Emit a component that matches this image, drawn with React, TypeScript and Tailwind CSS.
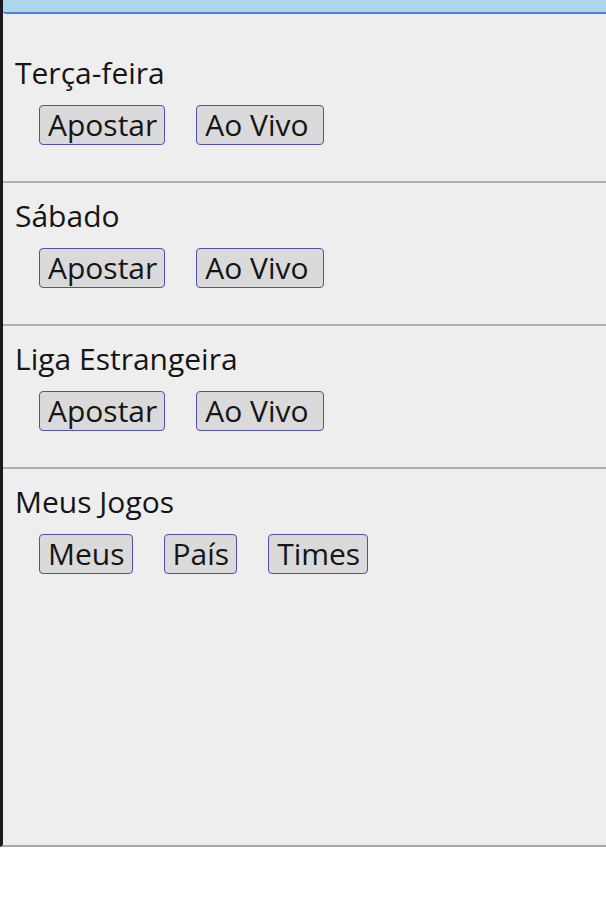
const sections = [
  { title: "Terça-feira", buttons: ["Apostar", "Ao Vivo"] },
  { title: "Sábado", buttons: ["Apostar", "Ao Vivo"] },
  { title: "Liga Estrangeira", buttons: ["Apostar", "Ao Vivo"] },
  { title: "Meus Jogos", buttons: ["Meus", "País", "Times"] },
];

export default function App() {
  return (
    <div className="w-[606px] h-[900px] bg-white" style={{ fontFamily: '"Open Sans", sans-serif' }}>
      <div className="h-[847px] bg-[#eeeeee] border-l-[3px] border-l-[#1a1a1a] border-b-2 border-b-[#a9a9a9] flex flex-col">
        <div className="h-[14px] bg-[#acd8ea] border-b-2 border-b-[#4d7fe6] rounded-bl-[3px]" />
        {sections.map((s, i) => {
          const last = i === sections.length - 1;
          return (
            <div
              key={s.title}
              className={
                "pl-3 pb-[36px] " +
                (i === 0 ? "pt-[41px]" : "pt-[15px]") +
                (last ? "" : " border-b-2 border-b-[#b0b0b0]")
              }
            >
              <div className="text-[30px] leading-[35px] text-[#151515]">{s.title}</div>
              <div className="flex gap-[31px] pl-6 mt-[15px]">
                {s.buttons.map((b) => (
                  <button
                    key={b}
                    className={
                      "h-[40px] pl-2 text-[30px] leading-[36px] text-[#151515] bg-[#dadada] border border-[#5050b0] rounded-[4px] " +
                      (b === "Ao Vivo" ? "pr-[14px]" : "pr-[7px]")
                    }
                  >
                    {b}
                  </button>
                ))}
              </div>
            </div>
          );
        })}
      </div>
    </div>
  );
}
